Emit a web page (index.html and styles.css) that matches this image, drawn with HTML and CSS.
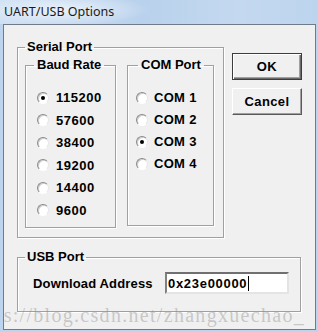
FILE: index.html
```html
<!DOCTYPE html>
<html lang="en">
<head>
    <meta charset="UTF-8">
    <title>UART/USB Options</title>
    <link rel="stylesheet" href="styles.css">
</head>
<body>
    <div class="window">
        <div class="titlebar">
            <span class="title">UART/USB Options</span>
        </div>
        <div class="client">
            <div class="top-row">
                <fieldset class="group serial">
                    <legend>Serial Port</legend>
                    <div class="serial-inner">
                        <fieldset class="group baud">
                            <legend>Baud Rate</legend>
                            <div class="radio-list baud-list">
                                <label class="radio-row"><input type="radio" name="baud" checked><span>115200</span></label>
                                <label class="radio-row"><input type="radio" name="baud"><span>57600</span></label>
                                <label class="radio-row"><input type="radio" name="baud"><span>38400</span></label>
                                <label class="radio-row"><input type="radio" name="baud"><span>19200</span></label>
                                <label class="radio-row"><input type="radio" name="baud"><span>14400</span></label>
                                <label class="radio-row"><input type="radio" name="baud"><span>9600</span></label>
                            </div>
                        </fieldset>
                        <fieldset class="group com">
                            <legend>COM Port</legend>
                            <div class="radio-list com-list">
                                <label class="radio-row"><input type="radio" name="com"><span>COM 1</span></label>
                                <label class="radio-row"><input type="radio" name="com"><span>COM 2</span></label>
                                <label class="radio-row"><input type="radio" name="com" checked><span>COM 3</span></label>
                                <label class="radio-row"><input type="radio" name="com"><span>COM 4</span></label>
                            </div>
                        </fieldset>
                    </div>
                </fieldset>
                <div class="buttons">
                    <button class="btn btn-default">OK</button>
                    <button class="btn">Cancel</button>
                </div>
            </div>

            <fieldset class="group usb">
                <legend>USB Port</legend>
                <div class="usb-row">
                    <span class="field-label">Download Address</span>
                    <div class="text-box">0x23e00000<span class="caret"></span></div>
                </div>
            </fieldset>

            <div class="watermark">https://blog.csdn.net/zhangxuechao_</div>
        </div>
    </div>
</body>
</html>
```

FILE: styles.css
```css
* {
    margin: 0;
    padding: 0;
    box-sizing: border-box;
}

body {
    width: 318px;
    height: 332px;
    overflow: hidden;
    font-family: "Liberation Sans", Arial, sans-serif;
}

.window {
    width: 318px;
    height: 332px;
    background: #bcd4ee;
    padding: 0 2px 2px 3px;
    display: flex;
    flex-direction: column;
}

.titlebar {
    height: 24px;
    margin-left: -3px;
    margin-right: -2px;
    padding-left: 4px;
    display: flex;
    align-items: center;
    background:
        radial-gradient(ellipse 90px 16px at 60px 10px, rgba(236, 243, 251, 0.95), rgba(236, 243, 251, 0) 100%),
        linear-gradient(90deg, #cfe0f3 0%, #b9d1ec 45%, #c4d9f0 75%, #bdd4ee 100%);
}

.title {
    font-family: "Noto Sans", "Open Sans", sans-serif;
    font-size: 12.5px;
    color: #1a1a1a;
    margin-top: -2px;
}

.client {
    position: relative;
    flex: 1;
    background: #f0f0f0;
    border: 1px solid #6f7b88;
    padding: 15px 0 0 13px;
    overflow: hidden;
}

.top-row {
    display: flex;
    align-items: flex-start;
}

/* group boxes */
.group {
    border: 1px solid #a0a0a0;
    box-shadow: 1px 1px 0 #fff, inset 1px 1px 0 #fff;
    min-width: 0;
}

.group legend {
    font-size: 13px;
    font-weight: bold;
    line-height: 14px;
    color: #000;
    white-space: nowrap;
    margin-left: 7px;
    padding: 0 2px;
}

.serial {
    width: 207px;
    height: 198px;
}

.serial-inner {
    display: flex;
    align-items: flex-start;
    padding: 4px 0 0 7px;
}

.baud {
    width: 91px;
    height: 170px;
}

.baud legend {
    margin-left: 8px;
    padding: 0 3px;
}

.com {
    width: 87px;
    height: 168px;
    margin-left: 11px;
}

.com legend {
    margin-left: 10px;
    padding: 0 3px;
}

.radio-list {
    display: flex;
    flex-direction: column;
}

.baud-list {
    gap: 9.6px;
    padding: 19px 0 0 11px;
}

.com-list {
    gap: 9px;
    padding: 19px 0 0 8px;
}

.radio-row {
    display: flex;
    align-items: center;
    height: 13px;
    font-size: 13px;
    font-weight: bold;
    color: #000;
    letter-spacing: 0.5px;
}

.com-list .radio-row {
    letter-spacing: 0.3px;
}

.radio-row input {
    appearance: none;
    -webkit-appearance: none;
    width: 12px;
    height: 12px;
    border-radius: 50%;
    background: #fff;
    border: 1px solid;
    border-color: #8a8a8a #e6e6e6 #ffffff #8a8a8a;
    box-shadow: inset 1px 1px 0 #cfcfcf;
    margin-right: 7px;
    position: relative;
    flex: none;
}

.com-list .radio-row input {
    margin-right: 6px;
}

.radio-row input:checked::after {
    content: "";
    position: absolute;
    left: 3px;
    top: 3px;
    width: 4px;
    height: 4px;
    border-radius: 50%;
    background: #000;
}

/* buttons */
.buttons {
    display: flex;
    flex-direction: column;
    gap: 8px;
    margin: 13px 0 0 8px;
}

.btn {
    width: 70px;
    height: 27px;
    font-family: "Liberation Sans", Arial, sans-serif;
    font-size: 13px;
    font-weight: bold;
    letter-spacing: 0.4px;
    color: #000;
    background: #f0f0f0;
    border: 1px solid;
    border-color: #fff #5a5a5a #5a5a5a #fff;
    box-shadow: inset -1px -1px 0 #a0a0a0;
}

.btn-default {
    border: 1px solid #3c3c3c;
    box-shadow: inset 1px 1px 0 #fff, inset -1px -1px 0 #6a6a6a, inset -2px -2px 0 #a0a0a0;
}

/* usb */
.usb {
    width: 284px;
    height: 62px;
    margin-top: 12px;
}

.usb-row {
    display: flex;
    align-items: center;
    padding: 8px 0 0 15px;
}

.field-label {
    font-size: 13px;
    font-weight: bold;
    letter-spacing: 0.15px;
    color: #000;
    width: 132px;
}

.text-box {
    width: 124px;
    height: 22px;
    background: #fff;
    border: 2px solid;
    border-color: #707070 #e4e4e4 #e4e4e4 #808080;
    padding-left: 1px;
    display: flex;
    align-items: center;
    font-size: 13px;
    font-weight: bold;
    letter-spacing: 0.7px;
    color: #000;
}

.caret {
    width: 1px;
    height: 15px;
    background: #000;
    margin-left: 1px;
}

.watermark {
    position: absolute;
    right: 10px;
    top: 279px;
    font-family: "Liberation Serif", serif;
    font-size: 20px;
    letter-spacing: 1.3px;
    white-space: nowrap;
    color: rgba(140, 140, 140, 0.42);
    pointer-events: none;
}
```
